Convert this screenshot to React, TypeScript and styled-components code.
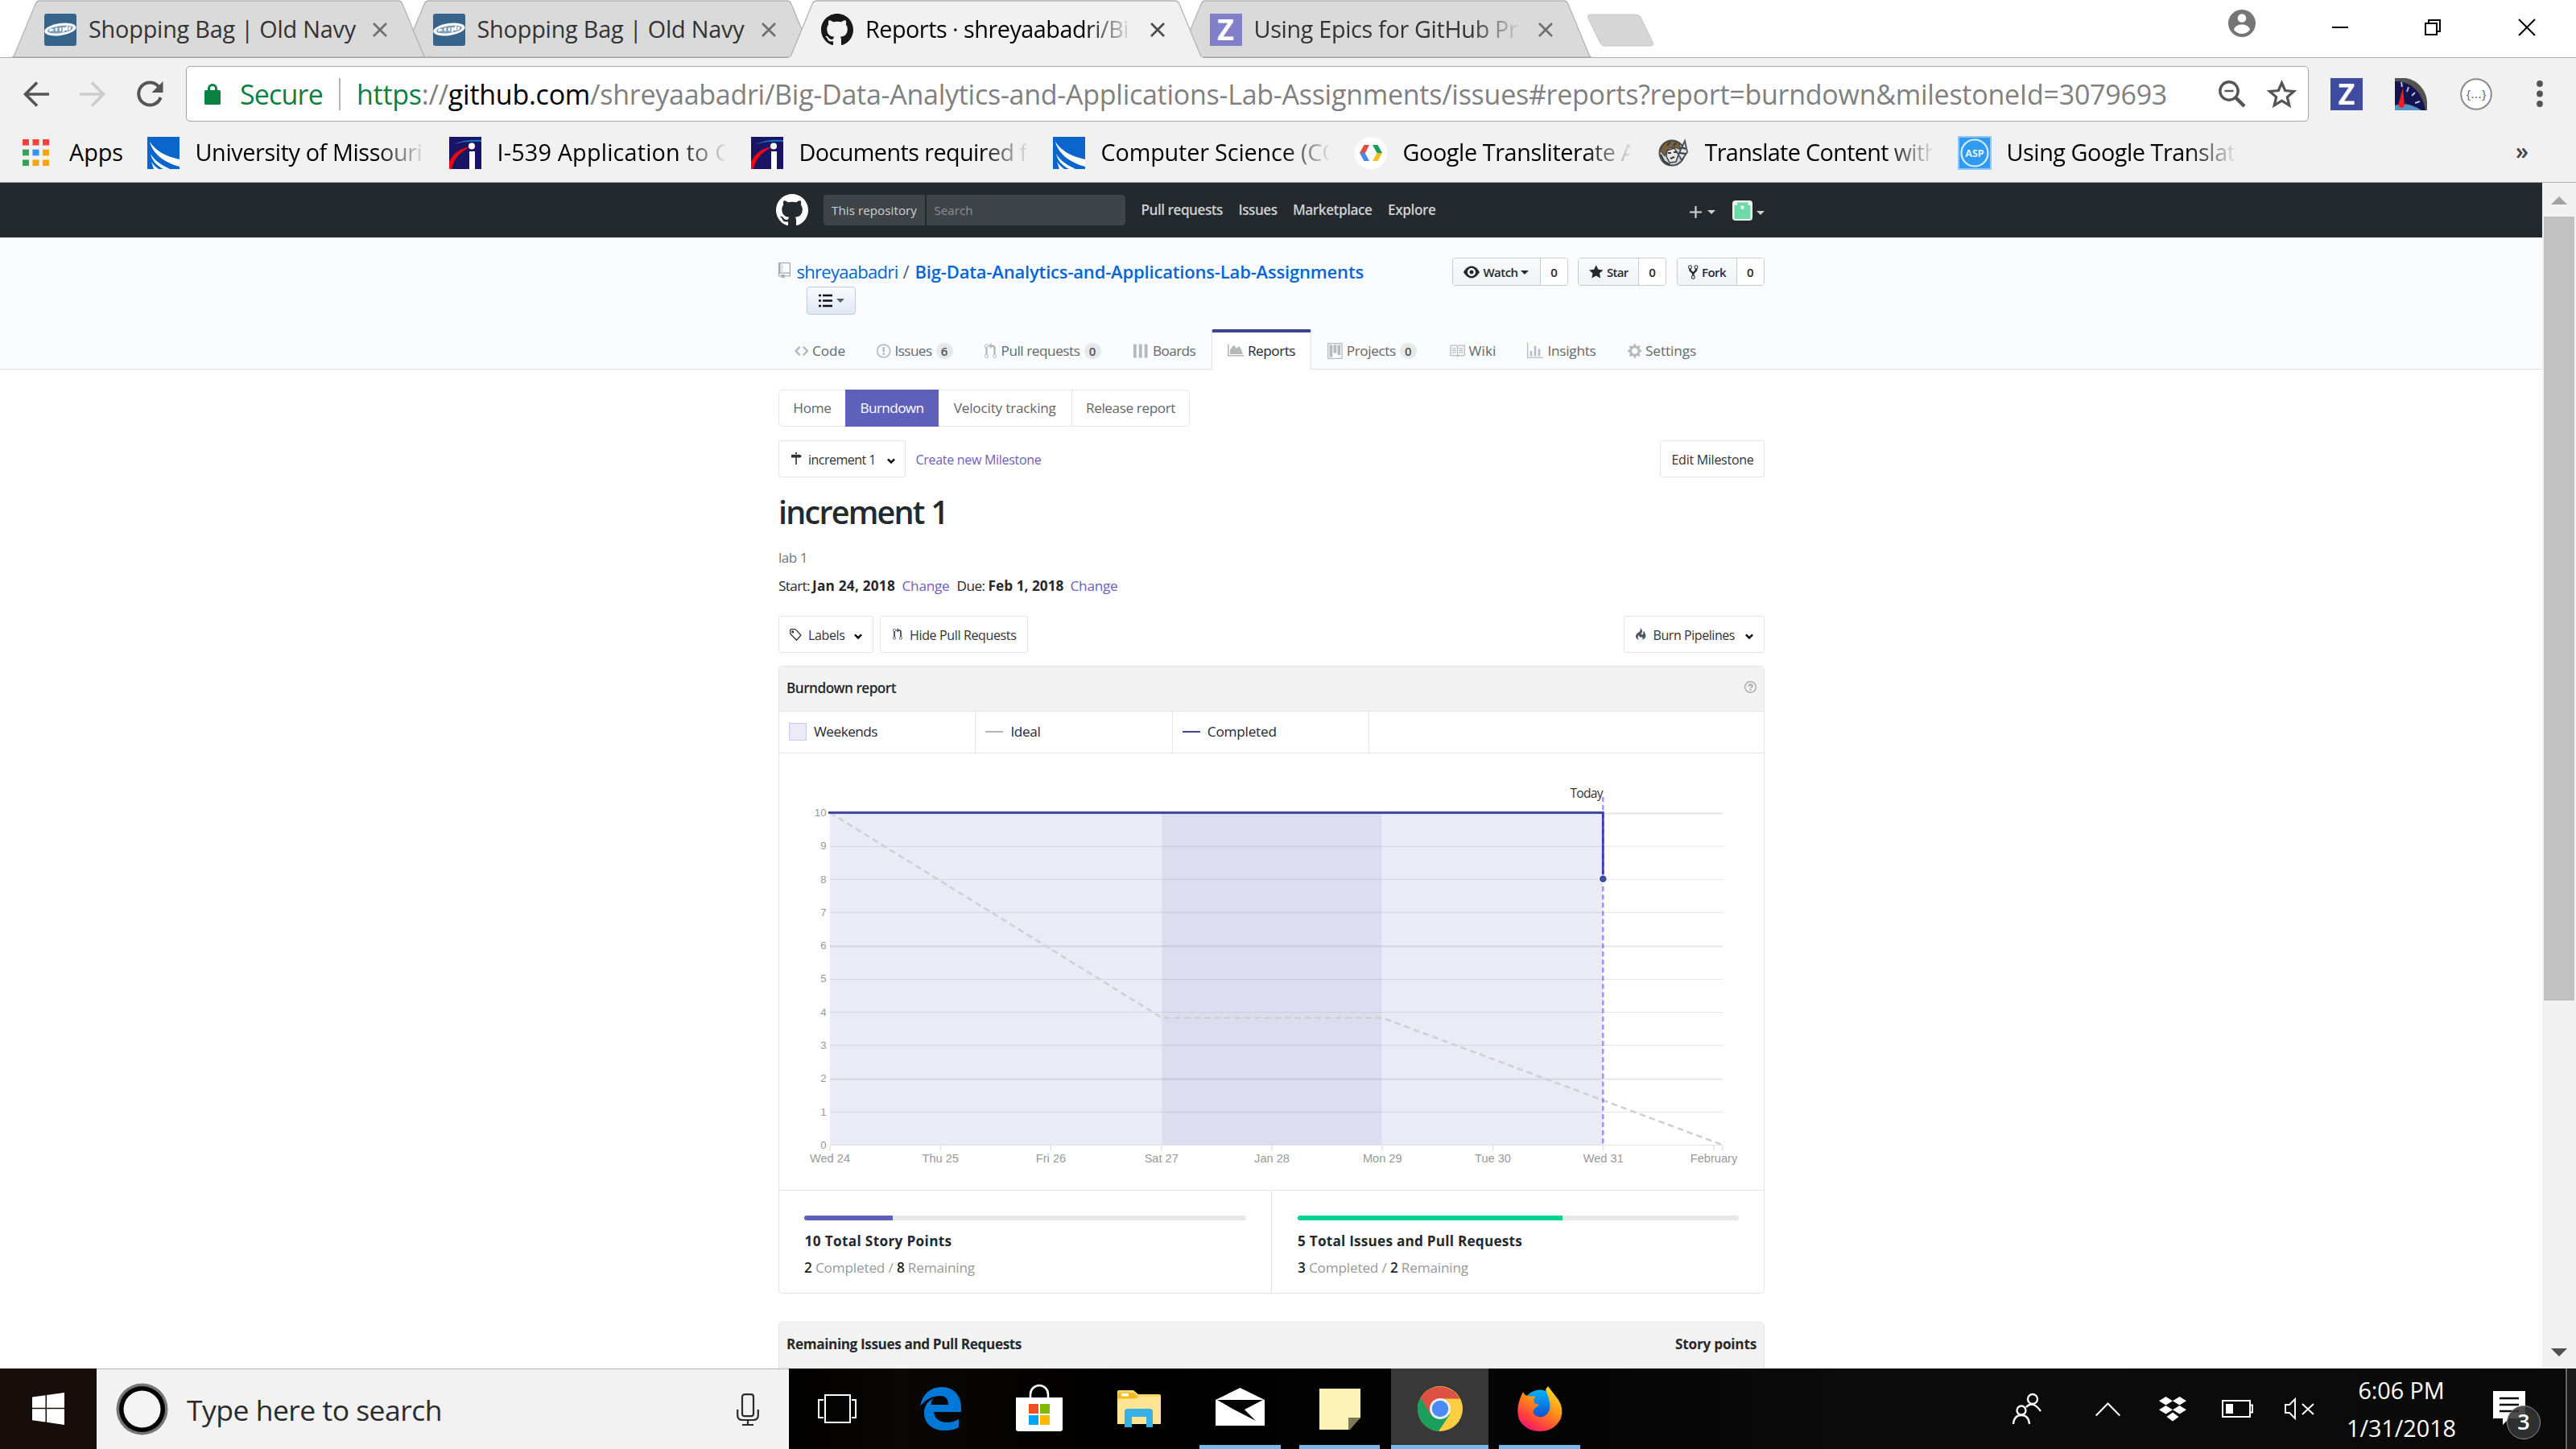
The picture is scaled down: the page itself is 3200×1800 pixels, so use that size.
import React, { useLayoutEffect, useRef, useState } from 'react';
import styled, { createGlobalStyle } from 'styled-components';

const sans = `"Open Sans", "Noto Sans", sans-serif`;

const GlobalStyle = createGlobalStyle`
  * { box-sizing: border-box; }
  html, body { margin: 0; padding: 0; background: #fff; overflow: hidden; }
  body { font-family: ${sans}; color: #24292e; }
`;

/* ---------- text ---------- */

const Measure = styled.span<{ $w: number; $size: number; $weight: number; $color: string; $ml: number; $mt: number }>`
  display: block;
  flex: none;
  width: ${p => p.$w}px;
  margin-left: ${p => p.$ml}px;
  margin-top: ${p => p.$mt}px;
  font-size: ${p => p.$size}px;
  font-weight: ${p => p.$weight};
  color: ${p => p.$color};
  line-height: 1.2;
  white-space: pre;
`;
const Ink = styled.span`display: inline-block;`;

type LabelProps = {
  w: number; size?: number; weight?: number; color?: string; ml?: number; mt?: number; children: React.ReactNode;
};

/** A single line of text whose tracking is adjusted to fill the given measure. */
function Label({ w, size = 17.2, weight = 400, color = 'inherit', ml = 0, mt = 0, children }: LabelProps) {
  const ref = useRef<HTMLSpanElement>(null);
  const [tracking, setTracking] = useState(0);
  useLayoutEffect(() => {
    const el = ref.current;
    if (!el) return;
    const n = (el.textContent || '').length;
    const natural = el.getBoundingClientRect().width;
    if (n > 1) setTracking((w - natural) / n);
  }, [w, size, weight]);
  return (
    <Measure $w={w} $size={size} $weight={weight} $color={color} $ml={ml} $mt={mt}>
      <Ink ref={ref} style={{ letterSpacing: tracking }}>{children}</Ink>
    </Measure>
  );
}

const Tint = styled.span<{ $c: string; $b?: boolean }>`
  color: ${p => p.$c};
  font-weight: ${p => (p.$b ? 600 : 400)};
`;

const Fade = styled.div<{ $w: number; $ml: number }>`
  flex: none;
  width: ${p => p.$w}px;
  margin-left: ${p => p.$ml}px;
  overflow: hidden;
  mask-image: linear-gradient(to right, #000 ${p => p.$w - 58}px, rgba(0, 0, 0, .08));
`;

/* ---------- icons ---------- */

const Svg = styled.svg<{ $ml?: number; $mt?: number }>`
  display: block;
  flex: none;
  margin-left: ${p => p.$ml || 0}px;
  margin-top: ${p => p.$mt || 0}px;
  overflow: visible;
`;

const glyphs = {
  mark: [16, 'M8 0C3.58 0 0 3.58 0 8c0 3.54 2.29 6.53 5.47 7.59.4.07.55-.17.55-.38 0-.19-.01-.82-.01-1.49-2.01.37-2.53-.49-2.69-.94-.09-.23-.48-.94-.82-1.13-.28-.15-.68-.52-.01-.53.63-.01 1.08.58 1.23.82.72 1.21 1.87.87 2.33.66.07-.52.28-.87.51-1.07-1.78-.2-3.64-.89-3.64-3.95 0-.87.31-1.59.82-2.15-.08-.2-.36-1.02.08-2.12 0 0 .67-.21 2.2.82.64-.18 1.32-.27 2-.27.68 0 1.36.09 2 .27 1.53-1.04 2.2-.82 2.2-.82.44 1.1.16 1.92.08 2.12.51.56.82 1.27.82 2.15 0 3.07-1.87 3.75-3.65 3.95.29.25.54.73.54 1.48 0 1.07-.01 1.93-.01 2.2 0 .21.15.46.55.38A8.013 8.013 0 0 0 16 8c0-4.42-3.58-8-8-8z'],
  code: [14, 'M9.5 3L8 4.5 11.5 8 8 11.5 9.5 13 14 8 9.5 3zm-5 0L0 8l4.5 5L6 11.5 2.5 8 6 4.5 4.5 3z'],
  issue: [14, 'M7 2.3c3.14 0 5.7 2.56 5.7 5.7s-2.56 5.7-5.7 5.7A5.71 5.71 0 0 1 1.3 8c0-3.14 2.56-5.7 5.7-5.7zM7 1C3.14 1 0 4.14 0 8s3.14 7 7 7 7-3.14 7-7-3.14-7-7-7zm1 3H6v5h2V4zm0 6H6v2h2v-2z'],
  pull: [12, 'M11 11.28V5c-.03-.78-.34-1.47-.94-2.06C9.46 2.35 8.78 2.03 8 2H7V0L4 3l3 3V4h1c.27.02.48.11.69.31.21.2.3.42.31.69v6.28A1.993 1.993 0 0 0 10 15a1.993 1.993 0 0 0 1-3.72zm-1 2.92c-.66 0-1.2-.55-1.2-1.2 0-.65.55-1.2 1.2-1.2.65 0 1.2.55 1.2 1.2 0 .65-.55 1.2-1.2 1.2zM4 3c0-1.11-.89-2-2-2a1.993 1.993 0 0 0-1 3.72v6.56A1.993 1.993 0 0 0 2 15a1.993 1.993 0 0 0 1-3.72V4.72c.59-.34 1-.98 1-1.72zm-.8 10c0 .66-.55 1.2-1.2 1.2-.65 0-1.2-.55-1.2-1.2 0-.65.55-1.2 1.2-1.2.65 0 1.2.55 1.2 1.2zM2 4.2C1.34 4.2.8 3.65.8 3c0-.65.55-1.2 1.2-1.2.65 0 1.2.55 1.2 1.2 0 .65-.55 1.2-1.2 1.2z'],
  repo: [12, 'M4 9H3V8h1v1zm0-3H3v1h1V6zm0-2H3v1h1V4zm0-2H3v1h1V2zm8-1v12c0 .55-.45 1-1 1H6v2l-1.5-1.5L3 16v-2H1c-.55 0-1-.45-1-1V1c0-.55.45-1 1-1h10c.55 0 1 .45 1 1zm-1 10H1v2h2v-1h3v1h5v-2zm0-10H2v9h9V1z'],
  eye: [16, 'M8.06 2C3 2 0 8 0 8s3 6 8.06 6C13 14 16 8 16 8s-3-6-7.94-6zM8 12c-2.2 0-4-1.78-4-4 0-2.2 1.8-4 4-4 2.22 0 4 1.8 4 4 0 2.22-1.78 4-4 4zm2-4c0 1.11-.89 2-2 2-1.11 0-2-.89-2-2 0-1.11.89-2 2-2 1.11 0 2 .89 2 2z'],
  star: [14, 'M14 6l-4.9-.64L7 1 4.9 5.36 0 6l3.6 3.26L2.67 14 7 11.67 11.33 14l-.93-4.74z'],
  fork: [10, 'M8 1a1.993 1.993 0 0 0-1 3.72V6L5 8 3 6V4.72A1.993 1.993 0 0 0 2 1a1.993 1.993 0 0 0-1 3.72V6.5l3 3v1.78A1.993 1.993 0 0 0 5 15a1.993 1.993 0 0 0 1-3.72V9.5l3-3V4.72A1.993 1.993 0 0 0 8 1zM2 4.2C1.34 4.2.8 3.65.8 3c0-.65.55-1.2 1.2-1.2.65 0 1.2.55 1.2 1.2 0 .65-.55 1.2-1.2 1.2zm3 10c-.66 0-1.2-.55-1.2-1.2 0-.65.55-1.2 1.2-1.2.65 0 1.2.55 1.2 1.2 0 .65-.55 1.2-1.2 1.2zm3-10c-.66 0-1.2-.55-1.2-1.2 0-.65.55-1.2 1.2-1.2.65 0 1.2.55 1.2 1.2 0 .65-.55 1.2-1.2 1.2z'],
  project: [15, 'M10 12h3V2h-3v10zm-4-2h3V2H6v8zm-4 4h3V2H2v12zm-1 1h13V1H1v14zM14 0H1a1 1 0 0 0-1 1v14a1 1 0 0 0 1 1h13a1 1 0 0 0 1-1V1a1 1 0 0 0-1-1z'],
  book: [16, 'M3 5h4v1H3V5zm0 3h4V7H3v1zm0 2h4V9H3v1zm11-5h-4v1h4V5zm0 2h-4v1h4V7zm0 2h-4v1h4V9zm2-6v9c0 .55-.45 1-1 1H9.5l-1 1-1-1H2c-.55 0-1-.45-1-1V3c0-.55.45-1 1-1h5.5l1 1 1-1H15c.55 0 1 .45 1 1zm-8 .5L7.5 3H2v9h6V3.5zm7-.5H9.5l-.5.5V12h6V3z'],
  graph: [16, 'M16 14v1H0V0h1v14h15zM5 13H3V8h2v5zm4 0H7V3h2v10zm4 0h-2V6h2v7z'],
  gear: [14, 'M14 8.77v-1.6l-1.94-.64-.45-1.09.88-1.84-1.13-1.13-1.81.91-1.09-.45-.69-1.92h-1.6l-.63 1.94-1.11.45-1.84-.88-1.13 1.13.91 1.81-.45 1.09L0 7.23v1.59l1.94.64.45 1.09-.88 1.84 1.13 1.13 1.81-.91 1.09.45.69 1.92h1.59l.63-1.94 1.11-.45 1.84.88 1.13-1.13-.92-1.81.47-1.09L14 8.75v.02zM7 11c-1.66 0-3-1.34-3-3s1.34-3 3-3 3 1.34 3 3-1.34 3-3 3z'],
  milestone: [14, 'M8 2H6V0h2v2zm4 5H2c-.55 0-1-.45-1-1V4c0-.55.45-1 1-1h10l2 2-2 2zM6.2 16h1.6V7H6.2v9z'],
  question: [14, 'M6 10h2v2H6v-2zm4-3.5C10 8.64 8 9 8 9H6c0-.55.45-1 1-1h.5c.28 0 .5-.22.5-.5v-1c0-.28-.22-.5-.5-.5h-1c-.28 0-.5.22-.5.5V7H4c0-1.5 1.5-3 3-3s3 1 3 2.5zM7 2.3c3.14 0 5.7 2.56 5.7 5.7s-2.56 5.7-5.7 5.7A5.71 5.71 0 0 1 1.3 8c0-3.14 2.56-5.7 5.7-5.7zM7 1C3.14 1 0 4.14 0 8s3.14 7 7 7 7-3.14 7-7-3.14-7-7-7z'],
  boards: [14, 'M0 1.2h3v13.6H0zM5.5 1.2h3v13.6h-3zM11 1.2h3v13.6h-3z'],
  area: [16, 'M0 2h1.3v10.8H16V14H0zM2.3 12V7.5L6 3l3 3.2L11.5 4 14 8l1 4z'],
  flame: [12, 'M5.05.31c.81 2.17.41 3.38-.52 4.31C3.55 5.67 1.98 6.45.9 7.98c-1.45 2.05-1.7 6.53 3.53 7.7-2.2-1.16-2.67-4.52-.3-6.61-.61 2.03.53 3.33 1.94 2.86 1.39-.47 2.3.53 2.27 1.67-.02.78-.31 1.44-1.13 1.81 3.42-.59 4.78-3.42 4.78-5.56 0-2.84-2.53-3.22-1.25-5.61-1.52.13-2.03 1.13-1.89 2.75.09 1.08-1.02 1.8-1.86 1.33-.67-.41-.66-1.19-.06-1.78C8.18 5.31 8.68 2.45 5.05.32L5.03.3l.02.01z'],
} as const;

function Glyph({ name, h = 20, w, color = 'currentColor', ml, mt }: { name: keyof typeof glyphs; h?: number; w?: number; color?: string; ml?: number; mt?: number }) {
  const [vw, d] = glyphs[name];
  return (
    <Svg $ml={ml} $mt={mt} width={w ?? (h * vw) / 16} height={h} viewBox={`0 0 ${vw} 16`} preserveAspectRatio="none" fill={color}>
      <path d={d} fillRule="evenodd" />
    </Svg>
  );
}

const Caret = styled.i<{ $c: string; $ml?: number; $mt?: number }>`
  flex: none;
  width: 0;
  height: 0;
  border: 5px solid transparent;
  border-top-color: ${p => p.$c};
  border-bottom: 0;
  margin-left: ${p => p.$ml || 0}px;
  margin-top: ${p => p.$mt || 0}px;
`;

const Chevron = ({ ml }: { ml: number }) => (
  <Svg $ml={ml} $mt={5} width="10" height="8" viewBox="0 0 11 8" fill="none" stroke="#111" strokeWidth="2.8">
    <path d="M1 1.2 5.5 5.6 10 1.2" />
  </Svg>
);

/* ---------- browser window ---------- */

const Screen = styled.div`
  width: 3200px;
  height: 1800px;
  display: flex;
  flex-direction: column;
  overflow: hidden;
  background: #fff;
`;

const TabStrip = styled.div`
  height: 72px;
  flex: none;
  display: flex;
  padding-left: 14px;
  background: linear-gradient(#fff 71px, #b0b0b0 71px);
`;

const TabBox = styled.div<{ $z: number }>`
  position: relative;
  z-index: ${p => p.$z};
  flex: none;
  display: flex;
  width: 516px;
  height: 72px;
  margin-right: -33.5px;
  padding-left: 41px;
`;

const TabShape = styled.svg`
  position: absolute;
  left: 0;
  top: 0;
  z-index: -1;
`;

const TabContent = styled.div`
  display: flex;
  height: 74px;
  align-items: center;
`;

function Tab({ z, active, children }: { z: number; active?: boolean; children: React.ReactNode }) {
  return (
    <TabBox $z={z}>
      <TabShape width="516" height="72" viewBox="0 0 516 72">
        <path
          d="M0 71.5 Q3 71 4 68 L30 5 Q31.500 1 36 1 H480 Q484.500 1 486 5 L512 68 Q513 71 516 71.500 Z"
          fill={active ? '#f1f1f1' : '#dadada'}
        />
        <path
          d="M0 71.5 Q3 71 4 68 L30 5 Q31.500 1 36 1 H480 Q484.500 1 486 5 L512 68 Q513 71 516 71.500"
          fill="none" stroke="#b4b4b4" strokeWidth="1.3"
        />
        <path d={active ? 'M1 71.500 H515' : 'M2 71.200 H514'} stroke={active ? '#f1f1f1' : '#a2a2a2'} strokeWidth="1.600" />
      </TabShape>
      <TabContent>{children}</TabContent>
    </TabBox>
  );
}

const CloseMark = ({ ml = 22, dark }: { ml?: number; dark?: boolean }) => (
  <Svg $ml={ml} width="18" height="18" viewBox="0 0 18 18" stroke={dark ? '#4a4a4a' : '#6e6e6e'} strokeWidth="2.6">
    <path d="M1 1 17 17M17 1 1 17" />
  </Svg>
);

const NavyIcon = () => (
  <Svg width="40" height="40" viewBox="0 0 40 40">
    <rect width="40" height="40" rx="3" fill="#37648b" />
    <ellipse cx="20" cy="19.500" rx="19.800" ry="7.500" fill="#fff" transform="rotate(-8 20 20)" />
    <ellipse cx="20" cy="19.500" rx="16" ry="4.600" fill="#7f9fb9" transform="rotate(-8 20 20)" />
    <path d="M7 22q1-4 4-1M15 21.500v-4M20 21.500v-4M24 17v4l4-4v4M32 16l-1 4" stroke="#fff" strokeWidth="2.400" fill="none" />
  </Svg>
);

const ZBadge = styled.div<{ $bg: string; $ml?: number }>`
  flex: none;
  width: 40px;
  height: 40px;
  margin-left: ${p => p.$ml || 0}px;
  display: flex;
  align-items: center;
  justify-content: center;
  background: ${p => p.$bg};
  color: #fff;
  font: 700 36px/40px ${sans};
`;

const WindowControls = styled.div`
  margin-left: auto;
  display: flex;
  height: 68px;
  align-items: center;
  padding-right: 51px;
`;

const Toolbar = styled.div`
  height: 89px;
  flex: none;
  display: flex;
  align-items: center;
  padding: 0 41px 0 29px;
  background: #f1f1f1;
`;

const Omnibox = styled.div`
  display: flex;
  align-items: center;
  width: 2637px;
  height: 69px;
  margin-left: 28px;
  padding-left: 22px;
  border: 1.5px solid #a6a6a6;
  border-radius: 5px;
  background: #fff;
`;

const Rule = styled.i<{ $h: number; $ml: number; $c: string }>`
  flex: none;
  width: 1.500px;
  height: ${p => p.$h}px;
  margin-left: ${p => p.$ml}px;
  background: ${p => p.$c};
`;

const BookmarkBar = styled.div`
  height: 66px;
  flex: none;
  display: flex;
  align-items: center;
  padding: 0 59px 8px 28px;
  background: #f1f1f1;
  border-bottom: 1.5px solid #a9adb0;
`;

const Bookmark = styled.div`
  display: flex;
  align-items: center;
  flex: none;
  width: 375px;
`;

const More = styled.span`
  margin-left: auto;
  color: #444;
  font: 600 29px/30px ${sans};
  margin-top: -6px;
`;

const UmkcIcon = () => (
  <Svg width="40" height="40" viewBox="0 0 40 40">
    <rect width="40" height="40" fill="#0a66cc" />
    <path d="M3 6C10 17 22 24 40 28v9C22 32 7 22 3 6zM4 21c5 9 14 14 24 19h-8C12 36 6 30 4 21zM5 31c3 4 5 6 9 9H8z" fill="#fff" />
  </Svg>
);

const ImmIcon = () => (
  <Svg width="40" height="40" viewBox="0 0 40 40">
    <rect width="40" height="40" fill="#1b1363" />
    <path d="M0 40V31C5 21 13 14 27 12 15 18 6 26 3 40z" fill="#f0060c" />
    <path d="M6 9C16 4 28 3 40 4v2C28 5 16 6 6 9z" fill="#0a7bc4" />
    <circle cx="28" cy="11.500" r="4" fill="#fff" />
    <path d="M25 18h7v22h-7z" fill="#fff" />
  </Svg>
);

const TransIcon = () => (
  <Svg width="40" height="40" viewBox="0 0 40 40">
    <circle cx="20" cy="20" r="20" fill="#fff" />
    <path d="M11.500 10H18L13 20H6z" fill="#dd5144" /><path d="M6 20H12.500L18 30H11.500z" fill="#4b87f0" />
    <path d="M22 10H28.500L34 20H27.500z" fill="#1a9e60" /><path d="M27.500 20H34L28.500 30H22z" fill="#f4bf1b" />
  </Svg>
);

const SketchIcon = () => (
  <Svg width="40" height="40" viewBox="0 0 40 40">
    <circle cx="19" cy="20" r="15.500" fill="#c8d4da" stroke="#4a5158" strokeWidth="2" />
    <path d="M5 18C6 6 19 1 28 8L30 16 23 13 15 14 10 24z" fill="#7a5f3c" stroke="#3d3a38" />
    <path d="M13 17l9-3 5 8-3 9-8 1-4-8z" fill="#e6e6e0" stroke="#3f4348" strokeWidth="1.500" />
    <path d="M35 5 27 22l4 7 7-10z" fill="#dfe3e5" stroke="#4a4f55" strokeWidth="1.800" />
    <path d="M14 20h4m3-1h4M17 27l5-2M5 22l5 10M9 30l8 5M31 13l5 2M28 20l8 1M13 11l4-5M21 11l3-4" stroke="#33383d" strokeWidth="2" />
  </Svg>
);

const AspIcon = () => (
  <Svg width="40" height="40" viewBox="0 0 40 40">
    <rect width="40" height="40" fill="#2f9bf3" stroke="#8fc8f8" strokeWidth="2" />
    <circle cx="20" cy="20" r="16.500" fill="none" stroke="#d9eefd" strokeWidth="2.200" />
    <text x="20" y="24.500" fontFamily="Open Sans" fontWeight="700" fontSize="12.500" fill="#e6f3fd" textAnchor="middle">ASP</text>
  </Svg>
);

const AppsIcon = () => {
  const colors = ['#f9423a', '#f9423a', '#f9423a', '#35a35a', '#3492f2', '#f2a60c', '#35a35a', '#f2a60c', '#f2a60c'];
  return (
    <Svg width="33" height="33" viewBox="0 0 33 33">
      {colors.map((c, i) => <rect key={i} x={(i % 3) * 12.500} y={Math.floor(i / 3) * 12.700} width="8" height="7.600" fill={c} />)}
    </Svg>
  );
};

const bookmarks: { icon: React.ReactNode; text: string; w: number }[] = [
  { icon: <UmkcIcon />, text: 'University of Missouri', w: 282 },
  { icon: <ImmIcon />, text: 'I-539 Application to C', w: 289 },
  { icon: <ImmIcon />, text: 'Documents required f', w: 283 },
  { icon: <UmkcIcon />, text: 'Computer Science (CO', w: 297 },
  { icon: <TransIcon />, text: 'Google Transliterate A', w: 289 },
  { icon: <SketchIcon />, text: 'Translate Content with', w: 290 },
  { icon: <AspIcon />, text: 'Using Google Translat', w: 284 },
];

function Chrome() {
  return (
    <>
      <TabStrip>
        <Tab z={3}>
          <NavyIcon /><Label w={332} size={28.800} color="#333" ml={15} mt={-1}>Shopping Bag | Old Navy</Label><CloseMark ml={21} />
        </Tab>
        <Tab z={2}>
          <NavyIcon /><Label w={332} size={28.800} color="#333" ml={15} mt={-1}>Shopping Bag | Old Navy</Label><CloseMark ml={21} />
        </Tab>
        <Tab z={5} active>
          <Glyph name="mark" h={40} color="#191717" />
          <Fade $w={328} $ml={15}><Label w={327} size={28.800} color="#000" mt={-1}>Reports · shreyaabadri/Bi</Label></Fade>
          <CloseMark ml={26} dark />
        </Tab>
        <Tab z={1}>
          <ZBadge $bg="#817fca">Z</ZBadge>
          <Fade $w={328} $ml={15}><Label w={328} size={28.800} color="#333" mt={-1}>Using Epics for GitHub Pr</Label></Fade>
          <CloseMark ml={25} />
        </Tab>
        <Svg $ml={28} $mt={18} width="82" height="40" viewBox="0 0 82 40">
          <path d="M4 0H60Q65 0 66.500 4L81 34Q83 39 78 39H22Q17 39 15 34L1 5Q-1 0 4 0z" fill="#d6d6d6" stroke="#c8c8c8" />
        </Svg>
        <WindowControls>
          <Svg $mt={-10} width="34" height="34" viewBox="0 0 34 34">
            <circle cx="17" cy="17" r="17" fill="#757575" />
            <circle cx="17" cy="10.500" r="5.300" fill="#fff" />
            <path d="M7 25C8 20 13 18.500 17 18.500S26 20 27 25C24 28.500 21 30 17 30S10 28.500 7 25z" fill="#fff" />
          </Svg>
          <Svg $ml={95} width="20" height="20"><path d="M0 10H20" stroke="#000" strokeWidth="2" /></Svg>
          <Svg $ml={95} width="20" height="20" fill="none" stroke="#000" strokeWidth="2">
            <path d="M1 5H15V19H1zM5 5V1H19V15H15" />
          </Svg>
          <Svg $ml={97} width="20" height="20" stroke="#000" strokeWidth="2"><path d="M0 0 20 20M20 0 0 20" /></Svg>
        </WindowControls>
      </TabStrip>
      <Toolbar>
        <Svg width="32" height="32" viewBox="0 0 32 32" fill="none" stroke="#555" strokeWidth="3.600"><path d="M32 16H3M17 1.500 2.500 16 17 30.500" /></Svg>
        <Svg $ml={38} width="32" height="32" viewBox="0 0 32 32" fill="none" stroke="#ccc" strokeWidth="3.600"><path d="M0 16H29M15 1.500 29.500 16 15 30.500" /></Svg>
        <Svg $ml={38} width="34" height="34" viewBox="0 0 34 34" fill="none">
          <path d="M28 7.500A14 14 0 1 0 30.500 21" stroke="#555" strokeWidth="4" /><path d="M33.500 1V15H19.500z" fill="#555" />
        </Svg>
        <Omnibox>
          <Svg width="20" height="27" viewBox="0 0 20 27" fill="#0b8043">
            <path d="M4 9V7a6 6 0 0 1 12 0v2h2.500a1.500 1.500 0 0 1 1.500 1.500v15a1.500 1.500 0 0 1-1.500 1.500h-17A1.500 1.500 0 0 1 0 25.500v-15A1.500 1.500 0 0 1 1.500 9zm3 0h6V7a3 3 0 0 0-6 0z" />
          </Svg>
          <Label w={103} size={34} color="#0b8043" ml={24} mt={1}>Secure</Label>
          <Rule $h={40} $ml={20} $c="#b4b4b4" />
          <Label w={2249} size={34} color="#808080" ml={20.500} mt={1}>
            <Tint $c="#0b8043">https</Tint>://<Tint $c="#000">github.com</Tint>/shreyaabadri/Big-Data-Analytics-and-Applications-Lab-Assignments/issues#reports?report=burndown&amp;milestoneId=3079693
          </Label>
          <Svg $ml={64} width="34" height="34" viewBox="0 0 34 34" fill="none" stroke="#555">
            <circle cx="13" cy="13" r="11.200" strokeWidth="3.400" /><path d="M21 21 32 32" strokeWidth="4.400" /><path d="M7.500 13h11" strokeWidth="2.400" />
          </Svg>
          <Svg $ml={26} width="37" height="35" viewBox="0 0 37 35" fill="none" stroke="#555" strokeWidth="3.200">
            <path d="M18.500 4 22.700 13.500 33.500 14.500 25.300 21.500 27.800 31.800 18.500 26.200 9.200 31.800 11.700 21.500 3.500 14.500 14.300 13.500z" />
          </Svg>
        </Omnibox>
        <ZBadge $bg="#3e4b9e" $ml={27}>Z</ZBadge>
        <Svg $ml={40} width="40" height="40" viewBox="0 0 40 40">
          <path d="M0 0H14A32 32 0 0 1 40 30V40H0z" fill="#55524f" />
          <path d="M0 4C20 4 34 17 38 40H0z" fill="#141450" />
          <path d="M0 34Q14 28 33 40H0z" fill="#4f93c8" />
          <path d="M8 5l1 6M17 11l-2 6M25 18l-4 4M31 29l-6 2" stroke="#b9bce0" strokeWidth="2" />
          <path d="M10 12 4 34Q8 40 12 34z" fill="#f01c22" />
        </Svg>
        <Svg $ml={41} width="40" height="40" viewBox="0 0 40 40">
          <circle cx="20" cy="20" r="18.800" fill="#fff" stroke="#8a8a8a" strokeWidth="2" />
          <text x="20" y="25" fontFamily="Open Sans" fontSize="15" fill="#666" textAnchor="middle" textLength="25">{'{...}'}</text>
        </Svg>
        <Svg $ml={55} width="8" height="33" viewBox="0 0 8 33" fill="#555">
          <circle cx="4" cy="4" r="3.900" /><circle cx="4" cy="16.500" r="3.900" /><circle cx="4" cy="29" r="3.900" />
        </Svg>
      </Toolbar>
      <BookmarkBar>
        <AppsIcon />
        <Label w={67} size={28.800} color="#000" ml={25}>Apps</Label>
        <Rule $h={1} $ml={28} $c="transparent" />
        {bookmarks.map((b, i) => (
          <Bookmark key={i}>
            {b.icon}
            <Fade $w={282} $ml={20}><Label w={b.w} size={28.800} color="#000">{b.text}</Label></Fade>
          </Bookmark>
        ))}
        <More>»</More>
      </BookmarkBar>
    </>
  );
}

/* ---------- page ---------- */

const Viewport = styled.div`
  display: flex;
  height: 1473px;
  flex: none;
  overflow: hidden;
`;

const Page = styled.div`
  width: 3158px;
  display: flex;
  flex-direction: column;
  flex: none;
`;

const Scrollbar = styled.div`
  width: 42px;
  padding: 17px 2px 15px;
  display: flex;
  flex-direction: column;
  align-items: center;
  background: #f1f1f1;
`;

const Thumb = styled.div`
  width: 38px;
  height: 974px;
  margin: 15px 0 auto;
  background: #c1c1c1;
`;

const Header = styled.header`
  height: 68px;
  flex: none;
  display: flex;
  align-items: center;
  padding: 0 966px 0 964px;
  background: #24292e;
`;

const SearchBox = styled.div`
  display: flex;
  align-items: center;
  width: 375px;
  height: 38px;
  margin-left: 19px;
  padding-left: 10px;
  border-radius: 4px;
  background: #3f4448;
`;

const Avatar = styled.div`
  width: 25px;
  height: 25px;
  margin-left: 21px;
  border-radius: 4px;
  background: #eef3f0;
  display: flex;
`;

const RepoHead = styled.section`
  height: 164px;
  flex: none;
  display: flex;
  flex-direction: column;
  justify-content: space-between;
  padding: 0 966px 0 967px;
  background: #fafbfc;
  box-shadow: inset 0 -1px #e1e4e8;
`;

const Row = styled.div<{ $h?: number; $mt?: number; $ml?: number }>`
  display: flex;
  align-items: center;
  flex: none;
  ${p => (p.$h ? `height: ${p.$h}px;` : '')}
  margin-top: ${p => p.$mt || 0}px;
  margin-left: ${p => p.$ml || 0}px;
`;

const RepoTop = styled.div`
  display: flex;
  justify-content: space-between;
  padding-top: 25px;
`;

const ListButton = styled.div`
  display: flex;
  align-items: center;
  width: 61px;
  height: 35px;
  margin: 2px 0 0 35px;
  padding-left: 14px;
  border: 1px solid #c3ccd5;
  border-radius: 4px;
  background: linear-gradient(#fafbfe, #dfe7f5);
`;

const Social = styled.div<{ $ml?: number }>`
  display: flex;
  height: 35px;
  margin-left: ${p => p.$ml || 0}px;
  border: 1px solid #c9cccf;
  border-radius: 4px;
  overflow: hidden;
`;
const SocialAction = styled.div<{ $w: number; $pl: number }>`
  display: flex;
  align-items: center;
  width: ${p => p.$w}px;
  padding-left: ${p => p.$pl}px;
  background: linear-gradient(#fafbfc, #eff3f6);
  border-right: 1px solid #c9cccf;
`;
const SocialCount = styled.div<{ $w: number }>`
  display: flex;
  align-items: center;
  justify-content: center;
  width: ${p => p.$w}px;
  background: #fff;
`;

const TabsNav = styled.nav`
  display: flex;
  height: 50px;
  padding-left: 20px;
  color: #62686f;
`;

const NavItem = styled.div<{ $w: number }>`
  display: flex;
  align-items: center;
  flex: none;
  width: ${p => p.$w}px;
  height: 50px;
  padding-top: 4px;
`;

const ActiveNavItem = styled(NavItem)`
  padding-top: 0;
  padding-left: 19px;
  color: #24292e;
  background: #fff;
  border: 1px solid #e1e4e8;
  border-top: 4px solid #3d4592;
  border-bottom: 0;
  border-radius: 3px 3px 0 0;
`;

const Counter = styled.span<{ $ml: number }>`
  width: 21px;
  height: 20px;
  margin-left: ${p => p.$ml}px;
  border-radius: 10px;
  background: #e7e8ea;
  color: #50565c;
  text-align: center;
  font: 600 15px/20px ${sans};
`;

const Main = styled.main`
  width: 1225px;
  margin-left: 967px;
  padding-top: 25px;
  display: flex;
  flex-direction: column;
  flex: none;
`;

const Segments = styled.div`
  display: flex;
  width: 511px;
  height: 46px;
  border: 1px solid #e6e6e6;
  border-radius: 5px;
  color: #666;
`;
const Segment = styled.div<{ $w: number; $on?: boolean; $line?: boolean }>`
  display: flex;
  align-items: center;
  justify-content: center;
  width: ${p => p.$w}px;
  flex: none;
  ${p => (p.$on ? 'background:#5e60ba;color:#fff;margin:-1px 0;' : '')}
  ${p => (p.$line ? 'border-right:1px solid #e6e6e6;' : '')}
`;

const Button = styled.div<{ $w: number; $pl: number; $ml?: string }>`
  display: flex;
  align-items: center;
  flex: none;
  width: ${p => p.$w}px;
  height: 46px;
  margin-left: ${p => p.$ml || '0'};
  padding-left: ${p => p.$pl}px;
  border: 1px solid #e4e4e4;
  border-radius: 3px;
  color: #333;
`;

const Panel = styled.section<{ $h: number; $mt: number }>`
  display: flex;
  flex-direction: column;
  flex: none;
  height: ${p => p.$h}px;
  margin-top: ${p => p.$mt}px;
  border: 1px solid #e4e4e4;
  border-radius: 5px;
  overflow: hidden;
`;
const PanelHead = styled.header`
  display: flex;
  align-items: center;
  justify-content: space-between;
  flex: none;
  height: 56px;
  padding: 0 9px;
  background: #f3f3f3;
  border-bottom: 1px solid #e4e4e4;
`;
const Legend = styled.div`
  display: flex;
  flex: none;
  height: 52px;
  border-bottom: 1px solid #e4e4e4;
`;
const LegendItem = styled.div`
  display: flex;
  align-items: center;
  width: 244.400px;
  padding-left: 12px;
  border-right: 1px solid #e6e6e6;
`;
const Swatch = styled.i`
  width: 22px;
  height: 22px;
  background: #ebebf7;
  border: 1px solid #c9cbe4;
`;
const Stroke = styled.i<{ $c: string }>`
  width: 22px;
  height: 2px;
  background: ${p => p.$c};
`;
const Stats = styled.div`
  display: flex;
  flex: 1;
  border-top: 1px solid #e4e4e4;
`;
const Stat = styled.div`
  width: 611px;
  padding: 31px 31px 0 31px;
  & + & { width: 612px; padding-left: 32px; border-left: 1px solid #e4e4e4; }
`;
const Track = styled.div`
  height: 6px;
  border-radius: 3px;
  background: #e8e8e8;
  overflow: hidden;
`;
const Fill = styled.div<{ $c: string }>`
  height: 6px;
  background: ${p => p.$c};
`;

const navy = '#3f4d9f';
const x0 = 1031, x1 = 2140, yTop = 1008.5, step = 41.28, yBase = 1421.3, day = 137.25, today = 1991.3;
const dayLabels = ['Wed 24', 'Thu 25', 'Fri 26', 'Sat 27', 'Jan 28', 'Mon 29', 'Tue 30', 'Wed 31', 'February'];

function BurndownChart() {
  const yOf = (v: number) => yBase - v * step;
  return (
    <Svg width="1223" height="542" viewBox="968 935 1223 542" fontFamily="Liberation Sans, Arial, sans-serif">
      {Array.from({ length: 11 }, (_, v) => (
        <g key={v}>
          <path d={`M${x0} ${Math.round(yOf(v)) + 0.5}H${x1}`} stroke="#e6e6e6" strokeWidth={[2, 6, 10].includes(v) ? 2 : 1} />
          <text x="1026.500" y={yOf(v) + 4.500} fontSize="13.200" fill="#999" textAnchor="end">{v}</text>
        </g>
      ))}
      <rect x={x0} y={yTop} width={today - x0} height={yBase - yTop} fill="#6062bd" fillOpacity=".125" />
      <rect x={1443.3} y={yTop} width={273.2} height={yBase - yTop} fill="#6062bd" fillOpacity=".1" />
      {dayLabels.map((t, i) => (
        <g key={t}>
          <path d={`M${x0 + i * day} ${yBase}v7.500`} stroke="#e0e0e0" strokeWidth="1.300" />
          <text x={x0 + i * day} y="1442.500" fontSize="14.600" fill="#999" textAnchor="middle">{t}</text>
        </g>
      ))}
      <path d={`M${x1} ${yBase}v7.500`} stroke="#e0e0e0" strokeWidth="1.300" />
      <path d={`M${x0} ${yTop}L1443.300 1263.300H1717L${x1 - 1} 1421`} fill="none" stroke="#cfcfcf" strokeWidth="2.500" strokeDasharray="7.500 5" />
      <path d={`M${x0 - 2} ${yTop}H${today}V1090.700`} fill="none" stroke={navy} strokeWidth="2.800" />
      <path d={`M${today} 989V${yBase}`} stroke="#3d00ff" strokeOpacity=".42" strokeWidth="2.500" strokeDasharray="6.250 3.850" />
      <circle cx={today} cy="1090.700" r="4.900" fill={navy} stroke="#fff" strokeWidth="1.200" />
      <text x="1991.500" y="990" fontFamily="Open Sans, sans-serif" fontSize="15.600" fill="#333" textAnchor="end" textLength="41">Today</text>
    </Svg>
  );
}

const ink = '#62686f';
const faint = '#b6babf';
const link = '#6b5fbf';

function GitHub() {
  return (
    <Page>
      <Header>
        <Glyph name="mark" h={40} color="#fff" />
        <SearchBox>
          <Label w={106} size={15.200} color="#d0d2d3">This repository</Label>
          <Rule $h={38} $ml={10} $c="#24292e" />
          <Label w={48} size={15.200} color="#8d9093" ml={10}>Search</Label>
        </SearchBox>
        <Label w={101.500} weight={600} color="#cfd0d1" ml={20}>Pull requests</Label>
        <Label w={48} weight={600} color="#cfd0d1" ml={19.500}>Issues</Label>
        <Label w={98.500} weight={600} color="#cfd0d1" ml={19.500}>Marketplace</Label>
        <Label w={59.500} weight={600} color="#cfd0d1" ml={19.500}>Explore</Label>
        <Svg $ml={315} $mt={4} width="15" height="15" viewBox="0 0 15 15" stroke="#cfd0d1" strokeWidth="2.200"><path d="M0 7.500H15M7.500 0V15" /></Svg>
        <Caret $c="#cfd0d1" $ml={7.500} $mt={5} />
        <Avatar>
          <Svg width="25" height="25" viewBox="0 0 25 25">
            <path d="M6 2.500H19.500V6H22.500V23H2.500V6H6z" fill="#6ddba6" /><rect x="10.500" y="6.500" width="4.200" height="4.200" fill="#eef3f0" />
          </Svg>
        </Avatar>
        <Caret $c="#cfd0d1" $ml={5} $mt={7} />
      </Header>

      <RepoHead>
        <RepoTop>
          <div>
            <Row $h={34}>
              <Glyph name="repo" h={20} color="#a3aab1" mt={-2} />
              <Label w={126} size={22} color="#0366d6" ml={7.500}>shreyaabadri</Label>
              <Label w={9} size={22} color="#586069" ml={6}>/</Label>
              <Label w={557.500} size={22} weight={600} color="#0366d6" ml={6}>Big-Data-Analytics-and-Applications-Lab-Assignments</Label>
            </Row>
            <ListButton>
              <Svg width="17" height="17" viewBox="0 0 17 17" stroke="#111" strokeWidth="2.700">
                <path d="M0 2h3M5 2h12M0 8.500h3M5 8.500h12M0 15h3M5 15h12" />
              </Svg>
              <Caret $c="#55606b" $ml={5} />
            </ListButton>
          </div>
          <Row $h={35}>
            <Social>
              <SocialAction $w={109} $pl={13}>
                <Glyph name="eye" h={20} /><Label w={43} size={15} weight={600} ml={4.500}>Watch</Label><Caret $c="#24292e" $ml={3} $mt={2} />
              </SocialAction>
              <SocialCount $w={33}><Label w={8.500} size={15} weight={600}>0</Label></SocialCount>
            </Social>
            <Social $ml={12}>
              <SocialAction $w={75} $pl={13}>
                <Glyph name="star" h={20} /><Label w={26.500} size={15} weight={600} ml={4.500}>Star</Label>
              </SocialAction>
              <SocialCount $w={33}><Label w={8.500} size={15} weight={600}>0</Label></SocialCount>
            </Social>
            <Social $ml={13}>
              <SocialAction $w={73.500} $pl={13}>
                <Glyph name="fork" h={20} /><Label w={30} size={15} weight={600} ml={4.500}>Fork</Label>
              </SocialAction>
              <SocialCount $w={33.500}><Label w={8.500} size={15} weight={600}>0</Label></SocialCount>
            </Social>
          </Row>
        </RepoTop>
        <TabsNav>
          <NavItem $w={102}><Glyph name="code" color={faint} h={20} /><Label w={41} color={ink} ml={4.500}>Code</Label></NavItem>
          <NavItem $w={134}><Glyph name="issue" color={faint} h={20} /><Label w={46} color={ink} ml={5}>Issues</Label><Counter $ml={5}>6</Counter></NavItem>
          <NavItem $w={185}><Glyph name="pull" color={faint} h={20} /><Label w={98} color={ink} ml={5.500}>Pull requests</Label><Counter $ml={5}>0</Counter></NavItem>
          <NavItem $w={97}><Glyph name="boards" color={faint} h={20} /><Label w={53} color={ink} ml={6.500}>Boards</Label></NavItem>
          <ActiveNavItem $w={124}><Glyph name="area" color="#b5b8bb" h={20} mt={-2} /><Label w={59} ml={5}>Reports</Label></ActiveNavItem>
          <NavItem $w={171}>
            <Glyph name="project" color={faint} h={20} ml={20} /><Label w={61} color={ink} ml={5}>Projects</Label><Counter $ml={5}>0</Counter>
          </NavItem>
          <NavItem $w={97}><Glyph name="book" color={faint} h={20} /><Label w={34} color={ink} ml={4.500}>Wiki</Label></NavItem>
          <NavItem $w={125}><Glyph name="graph" color={faint} h={20} /><Label w={60} color={ink} ml={5.500}>Insights</Label></NavItem>
          <NavItem $w={90}><Glyph name="gear" color={faint} h={20} /><Label w={63} color={ink} ml={4.500}>Settings</Label></NavItem>
        </TabsNav>
      </RepoHead>

      <Main>
        <Segments>
          <Segment $w={82}><Label w={47.500} mt={1}>Home</Label></Segment>
          <Segment $w={116} $on><Label w={79} mt={1}>Burndown</Label></Segment>
          <Segment $w={165.500} $line><Label w={127} mt={1}>Velocity tracking</Label></Segment>
          <Segment $w={146}><Label w={111} mt={1}>Release report</Label></Segment>
        </Segments>
        <Row $h={46} $mt={17}>
          <Button $w={158} $pl={14}>
            <Glyph name="milestone" h={15} w={14} mt={-1} color="#333" />
            <Label w={84} size={16} ml={8} mt={4}>increment 1</Label>
            <Chevron ml={13.500} />
          </Button>
          <Label w={156} size={16} color={link} ml={12.500} mt={4}>Create new Milestone</Label>
          <Button $w={130} $pl={13.500} $ml="auto"><Label w={102} size={16} mt={4}>Edit Milestone</Label></Button>
        </Row>
        <Row $h={50} $mt={19}><Label w={210} size={39.500} weight={600}>increment 1</Label></Row>
        <Row $h={24} $mt={19}><Label w={36} color="#777">lab 1</Label></Row>
        <Row $h={24} $mt={11}>
          <Label w={39}>Start:</Label>
          <Label w={103} weight={700} ml={3}>Jan 24, 2018</Label>
          <Label w={59} color={link} ml={8.500}>Change</Label>
          <Label w={35} ml={9}>Due:</Label>
          <Label w={94} weight={700} ml={4}>Feb 1, 2018</Label>
          <Label w={59} color={link} ml={8}>Change</Label>
        </Row>
        <Row $h={46} $mt={25}>
          <Button $w={118} $pl={13}>
            <Svg width="15" height="15" viewBox="0 0 15 15" fill="none" stroke="#333" strokeWidth="1.300">
              <path d="M.7 2.200Q.7.700 2.200.7H6Q7 .7 7.700 1.400L14 8 8.500 14.200 1.400 7Q.7 6.300.7 5.500z" /><circle cx="3.800" cy="3.900" r=".9" fill="#333" />
            </Svg>
            <Label w={45.500} size={16} ml={8} mt={3}>Labels</Label>
            <Chevron ml={11.500} />
          </Button>
          <Button $w={184} $pl={15} $ml="8px">
            <Glyph name="pull" h={15.500} w={12} mt={-1} color="#4e5966" />
            <Label w={132.500} size={16} ml={9} mt={3}>Hide Pull Requests</Label>
          </Button>
          <Button $w={175.500} $pl={14} $ml="auto">
            <Glyph name="flame" h={15.500} w={12.500} mt={-1} color="#4e5966" />
            <Label w={101.500} size={16} ml={9.500} mt={3}>Burn Pipelines</Label>
            <Chevron ml={12.500} />
          </Button>
        </Row>

        <Panel $h={780} $mt={15.500}>
          <PanelHead>
            <Label w={136} weight={600}>Burndown report</Label>
            <Glyph name="question" h={17} w={15} color="#aaa" mt={-3} />
          </PanelHead>
          <Legend>
            <LegendItem><Swatch /><Label w={79} ml={9}>Weekends</Label></LegendItem>
            <LegendItem><Stroke $c="#b5b5b5" /><Label w={37} ml={9}>Ideal</Label></LegendItem>
            <LegendItem><Stroke $c="#3d4592" /><Label w={86} ml={9}>Completed</Label></LegendItem>
          </Legend>
          <BurndownChart />
          <Stats>
            <Stat>
              <Track><Fill $c="#5e60ba" style={{ width: `${(2 / 10) * 100}%` }} /></Track>
              <Label w={183} weight={700} mt={16.500} ml={.5}>10 Total Story Points</Label>
              <Label w={212} mt={12} color="#999"><Tint $c="#24292e" $b>2</Tint> Completed / <Tint $c="#24292e" $b>8</Tint> Remaining</Label>
            </Stat>
            <Stat>
              <Track><Fill $c="#00d293" style={{ width: `${(3 / 5) * 100}%` }} /></Track>
              <Label w={279} weight={700} mt={16.500}>5 Total Issues and Pull Requests</Label>
              <Label w={212} mt={12} color="#999"><Tint $c="#24292e" $b>3</Tint> Completed / <Tint $c="#24292e" $b>2</Tint> Remaining</Label>
            </Stat>
          </Stats>
        </Panel>

        <Panel $h={90} $mt={35.500}>
          <PanelHead>
            <Label w={292} weight={700}>Remaining Issues and Pull Requests</Label>
            <Label w={101} weight={700}>Story points</Label>
          </PanelHead>
        </Panel>
      </Main>
    </Page>
  );
}

/* ---------- taskbar ---------- */

const Taskbar = styled.footer`
  display: flex;
  height: 100px;
  flex: none;
  background: linear-gradient(90deg, #000 960px, #0a0704 1120px, #000 1400px, #050505 2000px, #0b0b0b 2300px, #0a0a0a);
`;
const Start = styled.div`
  width: 120px;
  display: flex;
  align-items: center;
  justify-content: center;
  background: #170d0a;
`;
const SearchField = styled.div`
  display: flex;
  align-items: center;
  width: 860px;
  padding-left: 24px;
  background: #f2f2f2;
  border-top: 1px solid #b3b3b3;
`;
const TaskButton = styled.div<{ $w: number; $ml?: number; $run?: boolean; $on?: boolean }>`
  display: flex;
  align-items: center;
  justify-content: center;
  flex: none;
  width: ${p => p.$w}px;
  margin-left: ${p => p.$ml || 0}px;
  background: ${p => (p.$on ? '#383838' : 'transparent')};
  ${p => (p.$run ? 'box-shadow: inset 0 -5px #76b9ed;' : '')}
`;
const Tray = styled.div`
  display: flex;
  align-items: center;
  margin-left: auto;
  color: #fff;
`;
const Clock = styled.div`
  display: flex;
  flex-direction: column;
  align-items: center;
  width: 138px;
  margin-left: 39px;
  padding-top: 1px;
`;
const Notice = styled.div`
  position: relative;
  width: 40px;
  height: 44px;
  margin-left: 45px;
`;
const Badge = styled.div`
  position: absolute;
  left: 17px;
  top: 18px;
  width: 42px;
  height: 42px;
  border: 1.500px solid #8a8a8a;
  border-radius: 50%;
  background: rgba(52, 52, 52, .88);
  color: #fff;
  text-align: center;
  font: 600 27px/38px ${sans};
`;
const ShowDesktop = styled.div`
  width: 13px;
  height: 100px;
  margin-left: 50px;
  border-left: 2px solid #666;
  background: #1a1a1a;
`;

function WindowsBar() {
  return (
    <Taskbar>
      <Start>
        <Svg width="40" height="40" viewBox="0 0 40 40" fill="#fff">
          <path d="M0 5.500 16.500 3.200V18.700H0zM18 3 40 0V18.700H18zM0 20.300H16.500V36.500L0 34.300zM18 20.300H40V40L18 36.800z" />
        </Svg>
      </Start>
      <SearchField>
        <Svg width="65" height="65" viewBox="0 0 65 65">
          <circle cx="32.500" cy="32.500" r="32" fill="#767676" /><circle cx="32.500" cy="32.500" r="28.500" fill="#000" /><circle cx="32.500" cy="32.500" r="23" fill="#f4f4f4" />
        </Svg>
        <Label w={317} size={35.500} color="#2b2b2b" ml={23} mt={2}>Type here to search</Label>
        <Svg $ml={366} width="28" height="40" viewBox="0 0 28 40" fill="none" stroke="#2b2b2b" strokeWidth="2.200">
          <rect x="7" y="1.200" width="14" height="27" rx="3" /><path d="M1.200 20v7q0 6 6 6h13.600q6 0 6-6v-7M14 33v6M7 39h14" />
        </Svg>
      </SearchField>
      <TaskButton $w={120}>
        <Svg width="48" height="36" viewBox="0 0 48 36" fill="none" stroke="#fff" strokeWidth="2"><path d="M9 1H40V35H9zM7 7H1V29H7M42 7H47V29H42" /></Svg>
      </TaskButton>
      <TaskButton $w={136}>
        <Svg width="51" height="54" viewBox="0 0 51 54" fill="#0078d7">
          <path d="M0 24C3 8 13 0 27 0 42 0 51 11 51 25V31H17C18 39 24 44 33 44 39 44 44 42 48 40V50C43 53 37 54 31 54 16 54 5 46 5 32 5 23 10 17 17 14 13 17 14 22 14 22H35C35 15 32 11 25 11 14 11 5 17 0 24z" />
        </Svg>
      </TaskButton>
      <TaskButton $w={110}>
        <Svg width="58" height="58" viewBox="0 0 58 58">
          <path d="M18 16V11a11 11 0 0 1 22 0v5" fill="none" stroke="#fff" strokeWidth="2.600" />
          <path d="M0 15H58V54Q58 57 55 57H3Q0 57 0 54z" fill="#fff" />
          <path d="M16 23H28V35H16z" fill="#f25022" /><path d="M30 23H42V35H30z" fill="#7fba00" /><path d="M16 37H28V49H16z" fill="#00a4ef" /><path d="M30 37H42V49H30z" fill="#ffb900" />
        </Svg>
      </TaskButton>
      <TaskButton $w={138}>
        <Svg width="54" height="46" viewBox="0 0 54 46">
          <path d="M0 42V2Q0 0 2 0H20L26 5H52Q54 5 54 7V42z" fill="#fbd669" /><path d="M2 3H20L26 9 20 10H0z" fill="#f5b81f" /><rect x="5" y="4" width="9" height="3.500" fill="#fff" />
          <path d="M0 11H24L27 8H54V42H0z" fill="#ffe593" /><path d="M9 46V27Q9 23 13 23H40Q44 23 44 27V46H36V33H18V46z" fill="#35b1e6" />
        </Svg>
      </TaskButton>
      <TaskButton $w={101} $ml={6} $run>
        <Svg $mt={-5} width="61" height="47" viewBox="0 0 61 47"><path d="M0 15 30.500 0 61 15V47H0z" fill="#fff" /><path d="M2 15H59L36 27 50 41 21 26z" fill="#050505" /></Svg>
      </TaskButton>
      <TaskButton $w={100} $ml={23} $run>
        <Svg width="51" height="51" viewBox="0 0 51 51"><path d="M0 0H51V36L36 51H0z" fill="#fbf3b5" /><path d="M51 36V36L38 51H36V36z" fill="#7d7957" /></Svg>
      </TaskButton>
      <TaskButton $w={121} $ml={14} $run $on>
        <Svg width="56" height="56" viewBox="0 0 56 56">
          <circle cx="28" cy="28" r="28" fill="#ffcd42" />
          <path d="M28 28 3.700 14A28 28 0 0 0 26 56L40 35z" fill="#1a9f5c" />
          <path d="M28 28 16 35 3.700 14A28 28 0 0 1 52.300 15.500H28z" fill="#dd5044" />
          <circle cx="28" cy="28" r="13" fill="#f1f1f1" /><circle cx="28" cy="28" r="10.200" fill="#4c8bf5" />
        </Svg>
      </TaskButton>
      <TaskButton $w={101} $ml={13} $run>
        <Svg width="56" height="56" viewBox="0 0 56 56">
          <defs>
            <linearGradient id="fox" x1=".8" y1="0" x2=".2" y2="1"><stop offset="0" stopColor="#ffe226" /><stop offset=".45" stopColor="#ff8a16" /><stop offset=".8" stopColor="#ff3647" /><stop offset="1" stopColor="#e31587" /></linearGradient>
            <linearGradient id="globe" x1="0" y1="0" x2="0" y2="1"><stop offset="0" stopColor="#00b4f5" /><stop offset=".6" stopColor="#0a68e0" /><stop offset="1" stopColor="#3a2a9c" /></linearGradient>
          </defs>
          <circle cx="28" cy="26" r="21.500" fill="url(#globe)" />
          <path d="M7 7Q9 12 14 12 19 13 23 12 19 17 21 21L27 23 22 27Q17 31 22 36 28 40 34 37 42 32 40 20 38 11 35 4L38 0Q44 8 51 17 58 28 54 40 46 56 28 56 10 56 2 41-3 26 7 7z" fill="url(#fox)" />
        </Svg>
      </TaskButton>
      <Tray>
        <Svg width="36" height="38" viewBox="0 0 36 38" fill="none" stroke="#fff" strokeWidth="2.300">
          <circle cx="25" cy="7" r="6" /><circle cx="11" cy="21" r="5.500" /><path d="M17 17q8-9 18 5M1 38q1-11 10-11t10 11" />
        </Svg>
        <Svg $ml={67} width="31" height="17" viewBox="0 0 31 17" fill="none" stroke="#fff" strokeWidth="2"><path d="M.7 16.500 15.500 1.500 30.300 16.500" /></Svg>
        <Svg $ml={48} width="34" height="31" viewBox="0 0 34 31" fill="#fff">
          <path d="M8.500 0 17 5.300 8.500 10.600 0 5.300zM25.500 0 34 5.300 25.500 10.600 17 5.300zM8.500 11 17 16.300 8.500 21.600 0 16.300zM25.500 11 34 16.300 25.500 21.600 17 16.300zM17 19.500 24.500 25 17 30.500 9.500 25z" />
        </Svg>
        <Svg $ml={44} width="39" height="22" viewBox="0 0 39 22" fill="none" stroke="#fff" strokeWidth="2"><path d="M1 1H35V21H1zM35 6.500H38V15.500H35" /><path d="M5 5H14V17H5z" fill="#fff" stroke="none" /></Svg>
        <Svg $ml={39} width="37" height="28" viewBox="0 0 37 28" fill="none" stroke="#fff" strokeWidth="1.900"><path d="M1 9H6L13 2V26L6 19H1zM22 8 36 21M36 8 22 21" /></Svg>
        <Clock>
          <Label w={107} size={28.800}>6:06 PM</Label>
          <Label w={136} size={28.800} mt={12.500}>1/31/2018</Label>
        </Clock>
        <Notice>
          <Svg width="40" height="44" viewBox="0 0 40 44"><path d="M0 0H40V34H20L12 42V34H0z" fill="#fff" /><path d="M8 9H32M8 17H32M8 25H32" stroke="#0a0a0a" strokeWidth="2.400" /></Svg>
          <Badge>3</Badge>
        </Notice>
        <ShowDesktop />
      </Tray>
    </Taskbar>
  );
}

export default function App() {
  return (
    <>
      <GlobalStyle />
      <Screen>
        <Chrome />
        <Viewport>
          <GitHub />
          <Scrollbar>
            <Svg width="20" height="10" viewBox="0 0 20 10"><path d="M0 10 10 0 20 10z" fill="#a3a3a3" /></Svg>
            <Thumb />
            <Svg width="20" height="10" viewBox="0 0 20 10"><path d="M0 0 10 10 20 0z" fill="#505050" /></Svg>
          </Scrollbar>
        </Viewport>
        <WindowsBar />
      </Screen>
    </>
  );
}
